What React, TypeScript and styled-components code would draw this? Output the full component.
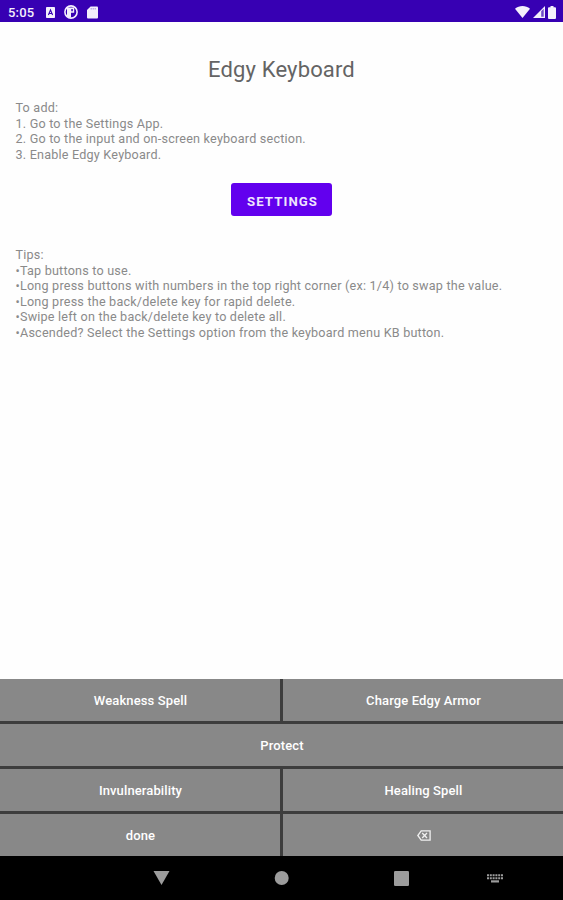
import React from 'react';
import styled, { createGlobalStyle } from 'styled-components';

const GlobalStyle = createGlobalStyle`
  * {
    box-sizing: border-box;
  }

  body {
    margin: 0;
    background: #ffffff;
    font-family: Roboto, sans-serif;
  }

  svg {
    display: block;
    flex: none;
  }
`;

const Screen = styled.div`
  display: flex;
  flex-direction: column;
  width: 563px;
  height: 900px;
  overflow: hidden;
  background: #fefefe;
`;

const StatusBar = styled.header`
  display: flex;
  justify-content: space-between;
  align-items: center;
  height: 22px;
  flex: none;
  padding: 2px 7px 0 8px;
  background: #3700b3;
  color: #f4f0fc;
`;

const StatusGroup = styled.div<{ $gap: number }>`
  display: flex;
  align-items: center;
  gap: ${(props) => props.$gap}px;
`;

const Clock = styled.span`
  width: 27px;
  margin-right: 2px;
  font-size: 13px;
  font-weight: 500;
  letter-spacing: 0.2px;
`;

const Content = styled.main`
  flex: 1;
  display: flex;
  flex-direction: column;
  padding: 33px 15px 0;
`;

const Title = styled.h1`
  margin: 0;
  font-size: 22px;
  line-height: 30px;
  font-weight: 400;
  letter-spacing: 0.15px;
  text-align: center;
  color: #646464;
`;

const Paragraph = styled.div`
  padding-left: 0.5px;
  font-size: 12.6px;
  line-height: 15.55px;
  letter-spacing: 0.21px;
  white-space: nowrap;
  color: #8a8a8a;
`;

const Instructions = styled(Paragraph)`
  margin-top: 15px;
`;

const Tips = styled(Paragraph)`
  margin-top: 31px;
`;

const SettingsButton = styled.button`
  align-self: center;
  width: 101px;
  height: 33px;
  margin-top: 21px;
  padding: 3px 0 0 2px;
  border: 0;
  border-radius: 3px;
  background: #6200ee;
  color: #eee4fd;
  font-family: inherit;
  font-size: 13.2px;
  font-weight: 700;
  letter-spacing: 1.1px;
`;

const Keyboard = styled.section`
  display: grid;
  grid-template-columns: 280px 280px;
  grid-auto-rows: 42px;
  gap: 3px;
  flex: none;
  background: #3d3d3d;
`;

const Key = styled.button<{ $wide?: boolean }>`
  display: flex;
  align-items: center;
  justify-content: center;
  grid-column: ${(props) => (props.$wide ? 'span 2' : 'auto')};
  padding: 0 0 0 1px;
  border: 0;
  background: #888888;
  color: #ffffff;
  font-family: inherit;
  font-size: 13px;
  font-weight: 500;
  letter-spacing: 0.12px;
`;

const NavBar = styled.nav`
  display: grid;
  grid-template-columns: 101px repeat(3, 120px) 68px;
  justify-items: center;
  align-items: center;
  height: 44px;
  flex: none;
  background: #000000;
  color: #9c9c9c;
`;

const LetterBadge = () => (
  <svg width="9" height="11" viewBox="0 0 9 11">
    <rect width="9" height="11" rx="0.8" fill="currentColor" />
    <path d="M2.4 8 4.5 3l2.1 5M3.2 6.5h2.6" fill="none" stroke="#3700b3" strokeWidth="1.1" />
  </svg>
);

// Ring with a flag-shaped mark inside
const CircleBadge = () => (
  <svg width="14" height="14" viewBox="0 0 14 14">
    <circle cx="7" cy="7" r="6.1" fill="none" stroke="currentColor" strokeWidth="1.6" />
    <path d="M3 2.4h7.2v5.4H7v4.6H4.2L3 11z" fill="currentColor" />
    <path d="M7.3 4h1.5v2.3H7.3z" fill="#3700b3" />
  </svg>
);

const SdCard = () => (
  <svg width="11" height="13" viewBox="0 0 11 13">
    <path d="M3.6 0.5H10a1 1 0 0 1 1 1v10a1 1 0 0 1-1 1H1a1 1 0 0 1-1-1V4z" fill="currentColor" />
    <path d="M4.2 2v1.5M6.2 2v1.5M8.2 2v1.5" stroke="#3700b3" strokeWidth="0.4" />
  </svg>
);

const Wifi = () => (
  <svg width="15" height="12" viewBox="0 0 15 12">
    <path d="M0 2.8C4.3-.9 10.7-.9 15 2.8L7.5 12z" fill="currentColor" />
  </svg>
);

const Signal = () => (
  <svg width="12" height="12" viewBox="0 0 12 12">
    <path d="M0 12 12 0v12z" fill="currentColor" />
    <path d="M8.2 5.2 10.7 2.8v7.9H8.2z" fill="#6f4ac8" />
  </svg>
);

const Battery = () => (
  <svg width="8" height="13" viewBox="0 0 8 13">
    <path d="M2.5 0h3v1.3H7a1 1 0 0 1 1 1V12a1 1 0 0 1-1 1H1a1 1 0 0 1-1-1V2.3a1 1 0 0 1 1-1h1.5z" fill="currentColor" />
  </svg>
);

const Backspace = () => (
  <svg width="14" height="11" viewBox="0 0 14 11">
    <path d="M4.2.8h8.9v9.4H4.2L.8 5.5z" fill="none" stroke="#f0f0f0" strokeWidth="1.3" />
    <path d="m5.2 3 4.8 5M10 3 5.2 8" stroke="#f0f0f0" strokeWidth="1.3" />
  </svg>
);

const BackIcon = () => (
  <svg width="17" height="15" viewBox="0 0 17 15">
    <path d="M0.5 0h16l-8 14z" fill="currentColor" />
  </svg>
);

const HomeIcon = () => (
  <svg width="15" height="14" viewBox="0 0 15 14">
    <circle cx="7.7" cy="7" r="7" fill="currentColor" />
  </svg>
);

const RecentsIcon = () => (
  <svg width="15" height="15" viewBox="0 0 15 15">
    <rect width="15" height="15" rx="1.3" fill="currentColor" />
  </svg>
);

const KeyboardIcon = () => (
  <svg width="16" height="9" viewBox="0 0 16 9">
    <path d="M0 1.2h16M0 4.2h16" stroke="currentColor" strokeWidth="2" strokeDasharray="2 0.8" />
    <path d="M4 7.4h8" stroke="currentColor" strokeWidth="2.2" />
  </svg>
);

export default function App() {
  return (
    <Screen>
      <GlobalStyle />
      <StatusBar>
        <StatusGroup $gap={9}>
          <Clock>5:05</Clock>
          <LetterBadge />
          <CircleBadge />
          <SdCard />
        </StatusGroup>
        <StatusGroup $gap={3}>
          <Wifi />
          <Signal />
          <Battery />
        </StatusGroup>
      </StatusBar>
      <Content>
        <Title>Edgy Keyboard</Title>
        <Instructions>
          <div>To add:</div>
          <div>1. Go to the Settings App.</div>
          <div>2. Go to the input and on-screen keyboard section.</div>
          <div>3. Enable Edgy Keyboard.</div>
        </Instructions>
        <SettingsButton>SETTINGS</SettingsButton>
        <Tips>
          <div>Tips:</div>
          <div>•Tap buttons to use.</div>
          <div>•Long press buttons with numbers in the top right corner (ex: 1/4) to swap the value.</div>
          <div>•Long press the back/delete key for rapid delete.</div>
          <div>•Swipe left on the back/delete key to delete all.</div>
          <div>•Ascended? Select the Settings option from the keyboard menu KB button.</div>
        </Tips>
      </Content>
      <Keyboard>
        <Key>Weakness Spell</Key>
        <Key>Charge Edgy Armor</Key>
        <Key $wide>Protect</Key>
        <Key>Invulnerability</Key>
        <Key>Healing Spell</Key>
        <Key>done</Key>
        <Key aria-label="Delete">
          <Backspace />
        </Key>
      </Keyboard>
      <NavBar>
        <span />
        <BackIcon />
        <HomeIcon />
        <RecentsIcon />
        <KeyboardIcon />
      </NavBar>
    </Screen>
  );
}
